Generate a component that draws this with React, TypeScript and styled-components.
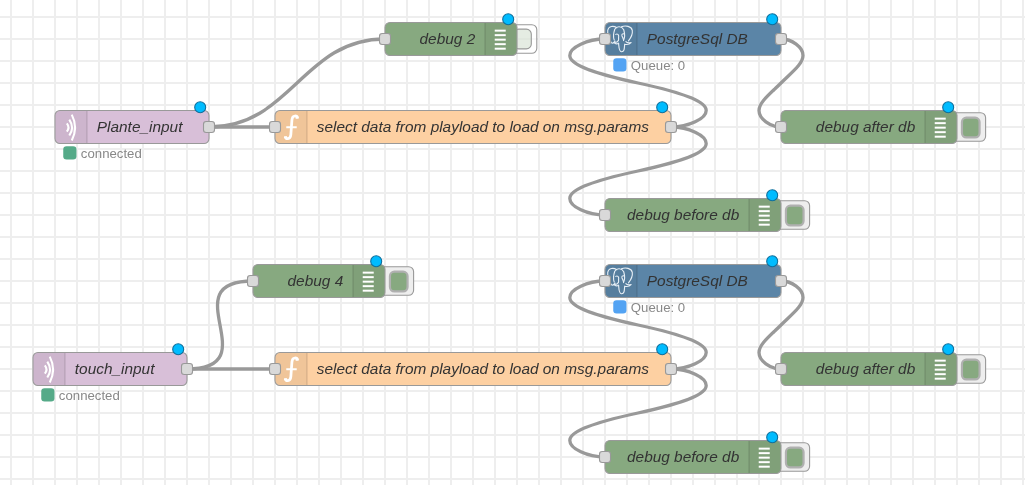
import React from "react";
import styled, { createGlobalStyle } from "styled-components";

const GlobalStyle = createGlobalStyle`
  html, body { margin: 0; padding: 0; background: #fff; }
`;

/* Flow coordinates are unscaled units; the workspace is zoomed to 110%. */
const ZOOM = 1.1;

const Viewport = styled.main`
  box-sizing: border-box;
  width: 1025px;
  height: 485px;
  padding: 17px 0 0 11px;
  overflow: hidden;
  background-color: #fff;
  background-image:
    linear-gradient(to right, #eee 2px, transparent 2px),
    linear-gradient(to bottom, #eee 2px, transparent 2px);
  background-size: 22px 22px;
  background-position: 10px 0, 0 16px;
  font-family: "Liberation Sans", Arial, sans-serif;
`;

const Workspace = styled.div`
  position: relative;
  width: 0;
  height: 0;
  transform: scale(${ZOOM});
  transform-origin: 0 0;
`;

const Wires = styled.svg`
  display: block;
  width: 1px;
  height: 1px;
  overflow: visible;
  fill: none;
  stroke: #999;
  stroke-width: 3;
`;

/* Half a unit back, so that 1px borders are centred on the node outline. */
const NodeLayer = styled.div`
  position: absolute;
  inset: 0;
  transform: translate(-0.5px, -0.5px);
`;

const NodeRoot = styled.div<{ $x: number; $y: number; $w: number }>`
  position: absolute;
  left: ${(p) => p.$x}px;
  top: ${(p) => p.$y - 15}px;
  width: ${(p) => p.$w + 1}px;
`;

const Body = styled.div<{ $color: string; $reverse?: boolean }>`
  position: relative;
  display: flex;
  flex-direction: ${(p) => (p.$reverse ? "row-reverse" : "row")};
  align-items: stretch;
  box-sizing: border-box;
  height: 31px;
  border: 1px solid #999;
  border-radius: 5px;
  background: ${(p) => p.$color};
  overflow: hidden;
`;

const IconCell = styled.div<{ $right?: boolean }>`
  flex: 0 0 29px;
  min-width: 0;
  box-sizing: border-box;
  display: flex;
  align-items: center;
  justify-content: center;
  background: rgba(0, 0, 0, 0.05);
  border-${(p) => (p.$right ? "left" : "right")}: 1px solid rgba(0, 0, 0, 0.12);
  svg { display: block; flex: none; overflow: visible; }
`;

const Label = styled.span<{ $right?: boolean }>`
  flex: 1;
  padding: 0 8.5px;
  line-height: 29px;
  font-size: 14px;
  font-style: italic;
  color: #333;
  white-space: nowrap;
  text-align: ${(p) => (p.$right ? "right" : "left")};
`;

const Port = styled.i<{ $side: "left" | "right" }>`
  position: absolute;
  top: 10px;
  ${(p) => p.$side}: -5px;
  box-sizing: border-box;
  width: 11px;
  height: 11px;
  border: 1px solid #999;
  border-radius: 3px;
  background: #d9d9d9;
`;

const ChangedDot = styled.i`
  position: absolute;
  top: -8px;
  right: 3px;
  box-sizing: border-box;
  width: 11px;
  height: 11px;
  border: 1px solid #0f6f9c;
  border-radius: 50%;
  background: #00bcff;
`;

const ButtonTab = styled.div<{ $on: boolean }>`
  position: absolute;
  top: 2px;
  right: ${(p) => (p.$on ? -26 : -18)}px;
  display: flex;
  align-items: center;
  justify-content: flex-end;
  box-sizing: border-box;
  width: 33px;
  height: 27px;
  padding-right: 4px;
  border: 1px solid #999;
  border-radius: 5px;
  background: ${(p) => (p.$on ? "#eee" : "rgba(255, 255, 255, 0.6)")};
`;

const ToggleButton = styled.div<{ $on: boolean }>`
  box-sizing: border-box;
  width: ${(p) => (p.$on ? 18 : 17)}px;
  height: ${(p) => (p.$on ? 20 : 19)}px;
  border: ${(p) => (p.$on ? "2px solid #b0b0b0" : "1px solid #999")};
  border-radius: 5px;
  background: ${(p) => (p.$on ? "#87a980" : "rgba(135, 169, 128, 0.22)")};
`;

const Status = styled.div`
  display: flex;
  align-items: flex-start;
  gap: 4px;
  padding: 2px 0 0 8px;
  font-size: 12px;
  line-height: 14px;
  color: #888;
  white-space: nowrap;
`;

const StatusDot = styled.i<{ $color: string }>`
  width: 12px;
  height: 12px;
  border-radius: 3px;
  background: ${(p) => p.$color};
`;

function MqttIcon() {
  return (
    <svg width="20" height="30" viewBox="0 0 40 60" fill="none" stroke="#fff" strokeWidth="3.800">
      <path d="M12.500 22.500q6 7.500 0 15" />
      <path d="M17 15.500q10 14.500 0 29" />
      <path d="M21.500 6.500q12 23.500 0 47" />
    </svg>
  );
}

function FunctionIcon() {
  return (
    <svg width="20" height="30" viewBox="0 0 40 60" fill="none" stroke="#fff" strokeWidth="5">
      <path d="M32 12.500c-.5-3-2.500-3.600-5-3.500-4 .2-4.800 3-5.200 7l-2 27c-.4 4.500-1.800 7-5.300 7.300-2.500.2-4.500-.6-5-3.500" />
      <path d="M11.500 29.500h19" strokeWidth="3.600" />
      <path d="M28.500 12.200h5.500M7.500 47.300h5.500" strokeWidth="3.400" />
    </svg>
  );
}

function DebugIcon() {
  return (
    <svg width="20" height="30" viewBox="0 0 40 60" fill="#fff">
      {[12, 20.2, 28.4, 36.6, 44.8].map((y) => (
        <rect key={y} x="8.5" y={y} width="20" height="3.6" />
      ))}
    </svg>
  );
}

function PostgresIcon() {
  return (
    <svg width="30" height="30" viewBox="0 0 32 32" fill="none" stroke="#e6eef5" strokeWidth="1.1" strokeLinecap="round" strokeLinejoin="round">
      <path d="M12 4.500C9 2.500 4 2.500 3.200 7c-.5 3.500 1.300 9 3.300 11.800 1.400 1.600 2.700.2 3.800-1.300" />
      <path d="M9.500 16.500C8 13 9 9 10 6c2-3.500 7-3 8.700.5 1 3.500 1.600 7-.2 10.500" />
      <path d="M16.500 3.500c4-1.500 9.500-.5 10.500 3.500.5 3.500-1.500 7.500-3.700 10.300" />
      <path d="M13.500 17c-1 2-3 2-4.500 1.800 1.500 1.500 3.500 1.500 4.700.7.300 3 .2 8 2.800 8.300 3 .2 2.800-3.500 3.100-7.300 2.500.6 5-.2 6.200-1.600-2 .4-4 .4-5-.9" />
      <path d="M11 11c1.500-1 3 .2 2.800 2-.3 1.500.2 3-.3 4M19 10.500c-1.500-.5-2.500.5-2 2 .5 1.300 1.300 2 1.500 4" />
    </svg>
  );
}

type Kind = "mqtt" | "function" | "debug" | "postgres";

const KINDS: Record<Kind, { color: string; icon: React.ReactNode }> = {
  mqtt: { color: "#d8bfd8", icon: <MqttIcon /> },
  function: { color: "#fdd0a2", icon: <FunctionIcon /> },
  debug: { color: "#87a980", icon: <DebugIcon /> },
  postgres: { color: "#5b85a7", icon: <PostgresIcon /> },
};

interface FlowNode {
  id: string;
  kind: Kind;
  label: string;
  x: number;
  y: number;
  w: number;
  off?: boolean;
  status?: { color: string; text: string };
}

const connected = { color: "#5a8", text: "connected" };
const queue = { color: "#53a3f3", text: "Queue: 0" };

const NODES: FlowNode[] = [
  { id: "plante", kind: "mqtt", label: "Plante_input", x: 40, y: 100, w: 140, status: connected },
  { id: "debug2", kind: "debug", label: "debug 2", x: 340, y: 20, w: 120, off: true },
  { id: "select1", kind: "function", label: "select data from playload to load on msg.params", x: 240, y: 100, w: 360 },
  { id: "pg1", kind: "postgres", label: "PostgreSql DB", x: 540, y: 20, w: 160, status: queue },
  { id: "after1", kind: "debug", label: "debug after db", x: 700, y: 100, w: 160 },
  { id: "before1", kind: "debug", label: "debug before db", x: 540, y: 180, w: 160 },
  { id: "touch", kind: "mqtt", label: "touch_input", x: 20, y: 320, w: 140, status: connected },
  { id: "debug4", kind: "debug", label: "debug 4", x: 220, y: 240, w: 120 },
  { id: "select2", kind: "function", label: "select data from playload to load on msg.params", x: 240, y: 320, w: 360 },
  { id: "pg2", kind: "postgres", label: "PostgreSql DB", x: 540, y: 240, w: 160, status: queue },
  { id: "after2", kind: "debug", label: "debug after db", x: 700, y: 320, w: 160 },
  { id: "before2", kind: "debug", label: "debug before db", x: 540, y: 400, w: 160 },
];

const LINKS: [string, string][] = [
  ["plante", "debug2"],
  ["plante", "select1"],
  ["select1", "pg1"],
  ["select1", "before1"],
  ["pg1", "after1"],
  ["touch", "debug4"],
  ["touch", "select2"],
  ["select2", "pg2"],
  ["select2", "before2"],
  ["pg2", "after2"],
];

const NODE_W = 100;
const CP = 15;

function wirePath(ox: number, oy: number, dx: number, dy: number): string {
  const w = dx - ox;
  const h = dy - oy;
  if (w > 0) {
    const dist = Math.hypot(w, h);
    const k = NODE_W * (dist < NODE_W ? 0.75 * (dist / NODE_W) : 0.75);
    return `M${ox} ${oy}C${ox + k} ${oy} ${dx - k} ${dy} ${dx} ${dy}`;
  }
  const near = Math.min(Math.abs(w), Math.abs(h));
  const k = NODE_W * (0.4 - 0.2 * Math.max(0, (NODE_W - near) / NODE_W));
  const s = h > 0 ? 1 : -1;
  const lo = s > 0 ? Math.min : Math.max;
  const hi = s > 0 ? Math.max : Math.min;
  const midX = Math.floor(dx - w / 2);
  const midY = Math.floor(dy - h / 2);
  const y1 = (dy + midY) / 2;
  const topX = ox + k;
  const topY = lo(y1 - h / 2, oy + s * CP);
  const botX = dx - k;
  const botY = hi(y1, dy - s * CP);
  const x1 = (ox + topX) / 2;
  let c1 = hi(oy, topY - s * CP);
  const c2 = lo(midY, topY + s * CP);
  let c3 = hi(midY, botY - s * CP);
  if (c2 === topY + s * CP) {
    if (Math.abs(h) < CP * 10) c1 = topY - (s * CP) / 2;
    c3 = botY - (s * CP) / 2;
  }
  return `M${ox} ${oy}C${x1} ${oy} ${topX} ${c1} ${topX} ${topY}S${x1} ${c2} ${midX} ${midY}S${botX} ${c3} ${botX} ${botY}S${(dx + botX) / 2} ${dy} ${dx} ${dy}`;
}

function NodeView({ node }: { node: FlowNode }) {
  const { color, icon } = KINDS[node.kind];
  const isDebug = node.kind === "debug";
  return (
    <NodeRoot $x={node.x} $y={node.y} $w={node.w}>
      {isDebug && (
        <ButtonTab $on={!node.off}>
          <ToggleButton $on={!node.off} />
        </ButtonTab>
      )}
      <Body $color={color} $reverse={isDebug}>
        <IconCell $right={isDebug}>{icon}</IconCell>
        <Label $right={isDebug}>{node.label}</Label>
      </Body>
      {node.kind !== "mqtt" && <Port $side="left" />}
      {!isDebug && <Port $side="right" />}
      <ChangedDot />
      {node.status && (
        <Status>
          <StatusDot $color={node.status.color} />
          <span>{node.status.text}</span>
        </Status>
      )}
    </NodeRoot>
  );
}

export default function App() {
  const byId = Object.fromEntries(NODES.map((n) => [n.id, n]));
  return (
    <>
      <GlobalStyle />
      <Viewport>
        <Workspace>
          <Wires>
            {LINKS.map(([a, b]) => (
              <path key={a + b} d={wirePath(byId[a].x + byId[a].w, byId[a].y, byId[b].x, byId[b].y)} />
            ))}
          </Wires>
          <NodeLayer>
            {NODES.map((n) => (
              <NodeView key={n.id} node={n} />
            ))}
          </NodeLayer>
        </Workspace>
      </Viewport>
    </>
  );
}
